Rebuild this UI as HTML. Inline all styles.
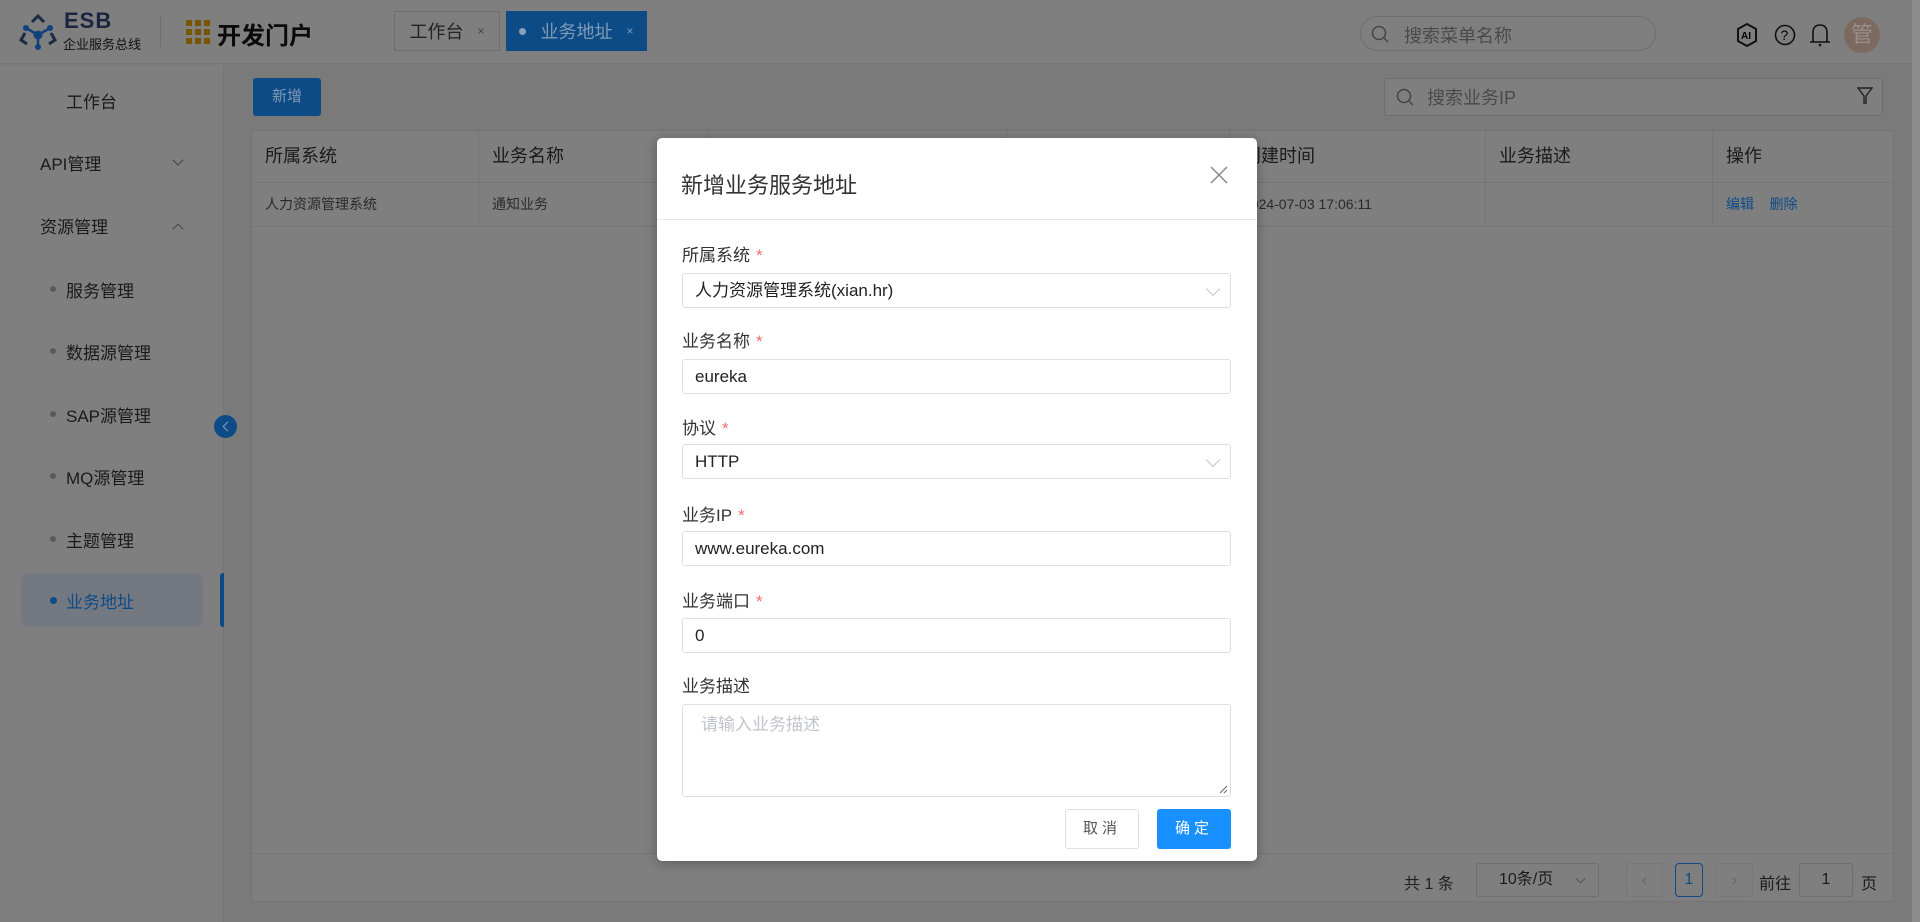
<!DOCTYPE html>
<html><head><meta charset="utf-8"><style>
*{box-sizing:border-box;margin:0;padding:0}
body{width:1920px;height:922px;overflow:hidden;position:relative;background:#7a7a7a;font-family:"Liberation Sans","Noto Sans CJK SC",sans-serif;color:#1a1a1a}
.a{position:absolute}
.hdr{left:0;top:0;width:1920px;height:64px;background:#7f7f7f;border-bottom:1px solid #737373}
.side{left:0;top:65px;width:224px;height:857px;background:#7f7f7f;border-right:1px solid #757575}
.mi{position:absolute;font-size:17px;color:#1a1a1a}
.dot{position:absolute;width:6px;height:6px;border-radius:50%;background:#5a5a5a}
.tab{top:11px;height:40px;font-size:18px;display:flex;align-items:center;justify-content:center;gap:14px}
.th{position:absolute;top:0;height:51px;line-height:51px;font-size:18px;padding-left:13px;border-right:1px solid #757575}
.td{position:absolute;top:51px;height:44px;line-height:44px;font-size:14px;padding-left:13px;color:#2a2a2a;border-right:1px solid #757575}
.modal{left:657px;top:138px;width:600px;height:723px;background:#fff;border-radius:5px;box-shadow:0 2px 12px rgba(0,0,0,.3)}
.lbl{position:absolute;left:25px;font-size:17px;color:#333}
.lbl b{color:#f56c6c;font-weight:normal;margin-left:6px}
.inp{position:absolute;left:25px;width:549px;height:35px;border:1px solid #dcdfe6;border-radius:3px;font-size:17px;line-height:33px;padding-left:12px;color:#222}
.chev{position:absolute;right:12px;top:10px;width:10px;height:10px;border-right:1px solid #c0c4cc;border-bottom:1px solid #c0c4cc;transform:rotate(45deg)}
</style></head><body>
<div class="a hdr"></div>
<svg class="a" style="left:19px;top:13px" width="38" height="38" viewBox="0 0 38 38">
<path d="M13 9 L19 3 L25 9" fill="none" stroke="#1c2a44" stroke-width="3"/>
<path d="M6 20 L2 27 L8 31" fill="none" stroke="#1c2a44" stroke-width="3"/>
<path d="M32 20 L36 27 L30 31" fill="none" stroke="#1c2a44" stroke-width="3"/>
<line x1="7" y1="15" x2="19" y2="22" stroke="#11427a" stroke-width="2.5"/><line x1="31" y1="15" x2="19" y2="22" stroke="#11427a" stroke-width="2.5"/><line x1="19" y1="22" x2="19" y2="34" stroke="#11427a" stroke-width="2.5"/>
<circle cx="7" cy="15" r="3" fill="#11427a"/><circle cx="31" cy="15" r="3" fill="#11427a"/><circle cx="19" cy="22" r="4.5" fill="#11427a"/><circle cx="19" cy="34" r="3" fill="#11427a"/>
</svg>
<div class="a" style="left:64px;top:8px;font-size:22px;font-weight:bold;color:#1c2540;letter-spacing:1px">ESB</div>
<div class="a" style="left:63px;top:34px;font-size:13px;color:#111">企业服务总线</div>
<div class="a" style="left:160px;top:16px;width:1px;height:31px;background:#6e6e6e"></div>
<svg class="a" style="left:186px;top:20px" width="24" height="24"><g fill="#7a5500">
<rect x="0" y="0" width="6" height="6"/><rect x="9" y="0" width="6" height="6"/><rect x="18" y="0" width="6" height="6"/>
<rect x="0" y="9" width="6" height="6"/><rect x="9" y="9" width="6" height="6"/><rect x="18" y="9" width="6" height="6"/>
<rect x="0" y="18" width="6" height="6"/><rect x="9" y="18" width="6" height="6"/><rect x="18" y="18" width="6" height="6"/></g></svg>
<div class="a" style="left:217px;top:16px;font-size:24px;font-weight:bold;color:#0a0a0a">开发门户</div>
<div class="a tab" style="left:394px;width:106px;border:1px solid #6e6e6e;background:#7f7f7f;color:#222">工作台<span style="font-size:12px;color:#444">×</span></div>
<div class="a tab" style="left:506px;width:141px;background:#0d4b87;color:#7f9ab5"><span style="width:7px;height:7px;border-radius:50%;background:#8aa0b8;display:inline-block"></span>业务地址<span style="font-size:12px">×</span></div>
<div class="a" style="left:1360px;top:16px;width:296px;height:35px;border:1px solid #6e6e6e;border-radius:18px"></div>
<svg class="a" style="left:1371px;top:25px" width="18" height="18"><circle cx="8" cy="8" r="6.5" fill="none" stroke="#444" stroke-width="1.5"/><line x1="13" y1="13" x2="17" y2="17" stroke="#444" stroke-width="1.5"/></svg>
<div class="a" style="left:1404px;top:22px;font-size:18px;color:#4a4a4a">搜索菜单名称</div>
<svg class="a" style="left:1736px;top:23px" width="22" height="24" viewBox="0 0 22 24"><path d="M11 1 L20 6 L20 18 L11 23 L2 18 L2 6 Z" fill="none" stroke="#111" stroke-width="2"/><text x="5" y="16" font-size="10" font-weight="bold" font-family="Liberation Sans">AI</text></svg>
<svg class="a" style="left:1774px;top:24px" width="22" height="22"><circle cx="11" cy="11" r="9.5" fill="none" stroke="#111" stroke-width="1.6"/><text x="6.5" y="16" font-size="14" font-family="Liberation Sans">?</text></svg>
<svg class="a" style="left:1809px;top:22px" width="22" height="26"><path d="M4 20 L4 11 Q4 3 11 3 Q18 3 18 11 L18 20 Z M1 20 L21 20" fill="none" stroke="#111" stroke-width="1.6"/><circle cx="11" cy="23" r="1.3" fill="#111"/></svg>
<div class="a" style="left:1844px;top:17px;width:36px;height:36px;border-radius:50%;background:#7c6a61;color:#9a8f8a;font-size:22px;text-align:center;line-height:36px">管</div>
<div class="a" style="left:1912px;top:0;width:8px;height:922px;background:#8d8d8d"></div>

<div class="a side"></div>
<div class="mi" style="left:66px;top:88px">工作台</div>
<div class="mi" style="left:40px;top:150px">API管理</div>
<div class="a" style="left:174px;top:156px;width:8px;height:8px;border-right:1px solid #444;border-bottom:1px solid #444;transform:rotate(45deg)"></div>
<div class="mi" style="left:40px;top:213px">资源管理</div>
<div class="a" style="left:174px;top:225px;width:8px;height:8px;border-left:1px solid #444;border-top:1px solid #444;transform:rotate(45deg)"></div>
<div class="dot" style="left:50px;top:286px"></div><div class="mi" style="left:66px;top:277px">服务管理</div>
<div class="dot" style="left:50px;top:348px"></div><div class="mi" style="left:66px;top:339px">数据源管理</div>
<div class="dot" style="left:50px;top:411px"></div><div class="mi" style="left:66px;top:402px">SAP源管理</div>
<div class="dot" style="left:50px;top:473px"></div><div class="mi" style="left:66px;top:464px">MQ源管理</div>
<div class="dot" style="left:50px;top:536px"></div><div class="mi" style="left:66px;top:527px">主题管理</div>
<div class="a" style="left:21px;top:573px;width:182px;height:54px;border-radius:8px;background:#747880"></div>
<div class="dot" style="left:50px;top:597px;width:7px;height:7px;background:#0d4b87"></div><div class="mi" style="left:66px;top:588px;color:#0d4b87">业务地址</div>
<div class="a" style="left:220px;top:573px;width:4px;height:54px;background:#0d4b87;border-radius:3px 0 0 3px"></div>

<div class="a" style="left:225px;top:65px;width:1687px;height:857px;background:#7a7a7a"></div>
<div class="a" style="left:214px;top:415px;width:23px;height:23px;border-radius:50%;background:#0d4b87"></div>
<div class="a" style="left:224px;top:423px;width:7px;height:7px;border-left:1.5px solid #8aa0b8;border-bottom:1.5px solid #8aa0b8;transform:rotate(45deg)"></div>
<div class="a" style="left:253px;top:78px;width:68px;height:38px;background:#0d4b87;border-radius:3px;color:#7f9ab5;font-size:15px;text-align:center;line-height:38px">新增</div>
<div class="a" style="left:1384px;top:78px;width:499px;height:38px;border:1px solid #6e6e6e;border-radius:3px;background:#7f7f7f"></div>
<svg class="a" style="left:1396px;top:88px" width="18" height="18"><circle cx="8" cy="8" r="6.5" fill="none" stroke="#444" stroke-width="1.5"/><line x1="13" y1="13" x2="17" y2="17" stroke="#444" stroke-width="1.5"/></svg>
<div class="a" style="left:1427px;top:84px;font-size:18px;color:#4a4a4a">搜索业务IP</div>
<svg class="a" style="left:1857px;top:87px" width="16" height="18"><path d="M1 1 L15 1 L9 9 L9 16 L7 16 L7 9 Z" fill="none" stroke="#222" stroke-width="1.4"/></svg>

<div class="a" style="left:251px;top:130px;width:1643px;height:772px;background:#7f7f7f;border:1px solid #757575">
<div class="a" style="left:0;top:51px;width:1641px;height:1px;background:#757575"></div>
<div class="a" style="left:0;top:95px;width:1641px;height:1px;background:#757575"></div>
<div class="a" style="left:0;top:722px;width:1641px;height:1px;background:#757575"></div>
<div class="th" style="left:0;width:227px">所属系统</div>
<div class="th" style="left:227px;width:229px">业务名称</div>
<div class="th" style="left:456px;width:300px"></div>
<div class="th" style="left:756px;width:222px"></div>
<div class="th" style="left:978px;width:256px">创建时间</div>
<div class="th" style="left:1234px;width:227px">业务描述</div>
<div class="th" style="left:1461px;width:180px;border:none">操作</div>
<div class="td" style="left:0;width:227px">人力资源管理系统</div>
<div class="td" style="left:227px;width:229px">通知业务</div>
<div class="td" style="left:456px;width:300px"></div>
<div class="td" style="left:756px;width:222px"></div>
<div class="td" style="left:978px;width:256px">2024-07-03 17:06:11</div>
<div class="td" style="left:1234px;width:227px"></div>
<div class="td" style="left:1461px;width:180px;border:none;color:#0d4b87">编辑&nbsp;&nbsp;&nbsp;&nbsp;删除</div>
<div class="a" style="left:1152px;top:739px;font-size:16px;color:#222">共 1 条</div>
<div class="a" style="left:1224px;top:732px;width:123px;height:34px;border:1px solid #6e6e6e;border-radius:3px;font-size:16px;line-height:32px;padding-left:22px">10条/页</div>
<div class="a" style="left:1325px;top:744px;width:7px;height:7px;border-right:1px solid #555;border-bottom:1px solid #555;transform:rotate(45deg)"></div>
<div class="a" style="left:1374px;top:732px;width:37px;height:34px;border:1px solid #777;border-radius:3px;text-align:center;line-height:32px;color:#6a6a6a;font-size:18px">‹</div>
<div class="a" style="left:1423px;top:732px;width:28px;height:34px;border:1px solid #0d4b87;border-radius:4px;color:#0d4b87;text-align:center;line-height:32px;font-size:16px">1</div>
<div class="a" style="left:1464px;top:732px;width:37px;height:34px;border:1px solid #777;border-radius:3px;text-align:center;line-height:32px;color:#6a6a6a;font-size:18px">›</div>
<div class="a" style="left:1507px;top:739px;font-size:16px">前往</div>
<div class="a" style="left:1547px;top:732px;width:54px;height:34px;border:1px solid #6e6e6e;border-radius:3px;text-align:center;line-height:32px;font-size:16px">1</div>
<div class="a" style="left:1609px;top:739px;font-size:16px">页</div>
</div>

<div class="a modal">
<div class="a" style="left:24px;top:30px;font-size:22px;color:#333">新增业务服务地址</div>
<svg class="a" style="left:553px;top:28px" width="18" height="18"><path d="M1 1 L17 17 M17 1 L1 17" stroke="#888" stroke-width="1.5"/></svg>
<div class="a" style="left:0;top:81px;width:600px;height:1px;background:#e4e7ed"></div>
<div class="lbl" style="top:103px">所属系统<b>*</b></div>
<div class="inp" style="top:135px">人力资源管理系统(xian.hr)<span class="chev"></span></div>
<div class="lbl" style="top:189px">业务名称<b>*</b></div>
<div class="inp" style="top:221px">eureka</div>
<div class="lbl" style="top:276px">协议<b>*</b></div>
<div class="inp" style="top:306px">HTTP<span class="chev"></span></div>
<div class="lbl" style="top:363px">业务IP<b>*</b></div>
<div class="inp" style="top:393px">www.eureka.com</div>
<div class="lbl" style="top:449px">业务端口<b>*</b></div>
<div class="inp" style="top:480px">0</div>
<div class="lbl" style="top:534px">业务描述</div>
<div class="inp" style="top:566px;height:93px;line-height:22px;padding:9px 18px;color:#c0c4cc">请输入业务描述
<svg style="position:absolute;right:2px;bottom:2px" width="9" height="9"><path d="M8 1 L1 8 M8 5 L5 8" stroke="#666" stroke-width="1"/></svg></div>
<div class="a" style="left:408px;top:671px;width:74px;height:40px;border:1px solid #dcdfe6;border-radius:3px;text-align:center;line-height:38px;font-size:15px;color:#555;letter-spacing:4px">取消</div>
<div class="a" style="left:500px;top:671px;width:74px;height:40px;background:#1890ff;border-radius:3px;text-align:center;line-height:40px;font-size:15px;color:#fff;letter-spacing:4px">确定</div>
</div>
</body></html>
